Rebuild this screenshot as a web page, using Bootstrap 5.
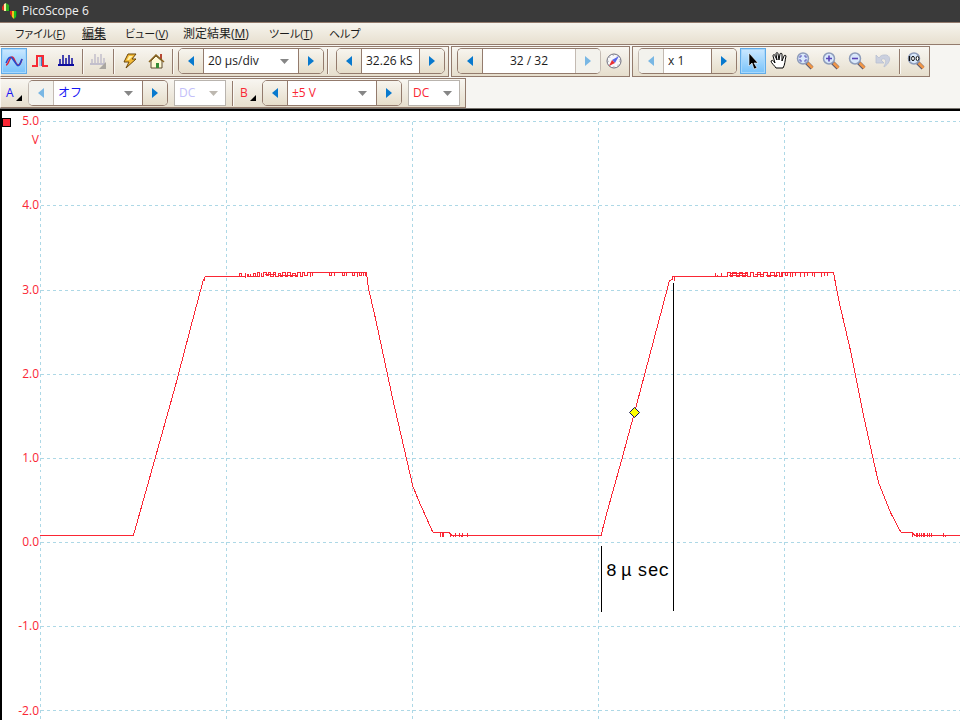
<!DOCTYPE html>
<html lang="ja">
<head>
<meta charset="utf-8">
<meta name="viewport" content="width=device-width, initial-scale=1">
<title>PicoScope 6</title>
<link rel="stylesheet" href="https://cdn.jsdelivr.net/npm/bootstrap@5.3.0/dist/css/bootstrap.min.css">
<style>
:root{--edge:#937b6d;--red:#fa2634}
body{font:12px/16px "Open Sans","Noto Sans CJK JP",sans-serif;color:#1c1c1c;background:#fff;overflow-x:hidden}
svg{display:block}
.titlebar{height:22px;background:#3a3a3a;color:#f2f2f2;padding-left:2px;gap:4px}
.titlebar h1{font-size:12px;line-height:22px;font-weight:400}
.menubar{display:grid;grid-template-columns:67px 43px 58px 86px 60px auto;height:23px;padding-left:15px;border-top:1px solid var(--edge);border-bottom:1px solid var(--edge);background:linear-gradient(#f7f5ee,#e7dfcf);font-feature-settings:"palt"}
.menubar a{color:#1c1c1c;text-decoration:none;line-height:22px;white-space:nowrap}
.menubar .kana{font-size:11px}
.dock{display:flex;flex-direction:column;gap:1px;background:#f6f5f2;padding-top:1px;border-bottom:1px solid #77736e}
.bars{column-gap:2px}
.strip{border:1px solid var(--edge);border-left-color:#fbf9f5;background:linear-gradient(#f8f6f1,#e6decd);padding:1px 3px 2px 0;flex:none}
.strip.framed{border-left-color:var(--edge);padding-left:5px;padding-right:2px}
.strip.framed:last-child{padding-right:0}
.strip.channels{padding:1px 5px 1px 1px}
.tool{width:26px;height:26px;padding:0;border:1px solid transparent;background:none;display:flex;align-items:center;justify-content:center;flex:none}
.tool.on{border-color:#62ace8;background:linear-gradient(#cbe8ff,#79c3fa);box-shadow:inset 0 0 0 1px #a8d7fb}
.tool.slim{width:24px}
.rule{width:2px;border-left:1px solid var(--edge);background:#fbf9f5;margin:1px 2px 0 3px;flex:none}
.stepper{border:1px solid var(--edge);border-radius:5px;height:26px;background:#fff;overflow:hidden;flex:none}
.stepper button{width:25px;border:0;padding:0;background:linear-gradient(#f7f5ef,#e6ddca);display:flex;align-items:center;justify-content:center;color:#0879ce}
.stepper button:first-child{border-right:1px solid var(--edge)}
.stepper button:last-child{border-left:1px solid var(--edge)}
.stepper button:disabled{color:#79b7e4;background:#f3f2ed;border-color:#c3bab2}
.stepper.dimleft{border-left-color:#c3bab2}
.stepper.dimright{border-right-color:#c3bab2}
.val{border:0;border-radius:0;padding:0 4px;font-size:12px;line-height:16px;background-color:#fff;color:#1c1c1c;min-width:0;outline:0;flex:1}
select.val,.coupling{appearance:none;background:#fff url("data:image/svg+xml,%3Csvg xmlns='http://www.w3.org/2000/svg' width='9' height='5'%3E%3Cpath d='M0 0h9L4.500 5z' fill='%23868686'/%3E%3C/svg%3E") no-repeat right 9px center}
.coupling{width:52px;height:26px;border:1px solid #b9b4ae;border-radius:0;padding:0 4px;font-size:12px;color:var(--red);flex:none;background-position:right 7px center}
.coupling:disabled{color:#c3c0fa;opacity:1;background-image:url("data:image/svg+xml,%3Csvg xmlns='http://www.w3.org/2000/svg' width='9' height='5'%3E%3Cpath d='M0 0h9L4.500 5z' fill='%23bdb8b0'/%3E%3C/svg%3E")}
.w-time{width:146px}.w-samples{width:109px}.w-page{width:144px}.w-zoom{width:99px}.w-range{width:140px}
.chan-a,.chan-a .val{color:#1616f5}
.chan-b,.chan-b .val{color:var(--red)}
.chan{padding:0 5px 0 4px;border:0;background:none;color:inherit;display:flex;align-items:center;gap:2px;height:26px;width:26px;flex:none}
.chan svg{margin-top:10px}
.gap-xs{margin-left:2px}.gap-s{margin-left:3px}.gap-l{margin-left:5px}.gap-m{margin-left:6px}
.scope{border-top:2px solid #000;border-left:2px solid #000}
.scope text{font-family:"Open Sans",sans-serif;font-size:12px;fill:var(--red)}
.scope .note text{font-family:"Liberation Mono",monospace;font-size:18px;fill:#000}
</style>
<script src="https://cdn.jsdelivr.net/npm/bootstrap@5.3.0/dist/js/bootstrap.bundle.min.js"></script>
</head>
<body>
<svg width="0" height="0" class="position-absolute" aria-hidden="true">
  <symbol id="prev" viewBox="0 0 6 10"><path d="M6 0v10L0 5z" fill="currentColor"/></symbol>
  <symbol id="next" viewBox="0 0 6 10"><path d="M0 0v10l6-5z" fill="currentColor"/></symbol>
  <symbol id="lens" viewBox="0 0 18 18">
    <path d="M10 10l6 6" stroke="#5c5a70" stroke-width="4"/>
    <path d="M11.500 11l5 5" stroke="#f09648" stroke-width="2.600"/>
    <circle cx="7" cy="6.500" r="5.500" fill="#d9e8fb" stroke="#8e9cba" stroke-width="1.500"/>
  </symbol>
  <symbol id="corner" viewBox="0 0 6 6"><path d="M6 0v6H0z" fill="#000"/></symbol>
</svg>

<header>
  <div class="titlebar d-flex align-items-center">
    <svg width="16" height="18" viewBox="0 0 16 18" aria-hidden="true">
      <path d="M0 8V5l2-3h2v7z" fill="#e03020"/><path d="M2 9V2l2-1v8z" fill="#f8f0a0"/><path d="M4 9V1l3 2v6z" fill="#30b020"/><path d="M7 9V4l1 2v3z" fill="#104a20"/>
      <path d="M8 9h2v6l-2-3z" fill="#e02818"/><path d="M10 9h2v8l-2-2z" fill="#f0c818"/><path d="M12 9h2v6l-2 2z" fill="#20c020"/><path d="M14 9h1v4l-1 2z" fill="#107020"/>
    </svg>
    <h1 class="m-0">PicoScope 6</h1>
  </div>
  <nav class="menubar">
    <a href="#" class="kana">ファイル(<u>F</u>)</a><a href="#"><u>編集</u></a><a href="#" class="kana">ビュー(<u>V</u>)</a><a href="#">測定結果(<u>M</u>)</a><a href="#" class="kana">ツール(<u>T</u>)</a><a href="#" class="kana">ヘルプ</a>
  </nav>
</header>

<div class="dock">
  <div class="bars d-flex flex-wrap">
    <div class="strip d-flex" role="toolbar" aria-label="収集">
      <button class="tool on" aria-label="スコープ モード"><svg width="18" height="14" viewBox="0 0 18 14" fill="none"><path d="M1 11C4 11 4 3 7 3s3 8 6 8 3-4 4-6" stroke="#e0283c" stroke-width="1.500"/><path d="M1 9C3 4 5 2 7 4l5 7c2 2 3-1 5-6" stroke="#234bd0" stroke-width="1.500"/></svg></button>
      <button class="tool" aria-label="残光モード"><svg width="16" height="14" viewBox="0 0 16 14"><path d="M7 2h4v10H7z" fill="#a9cbe8"/><path d="M9 2h2v10H9z" fill="#467fb8"/><path d="M0 12h5V2h6v10h5" fill="none" stroke="#f52b35" stroke-width="2"/></svg></button>
      <button class="tool" aria-label="スペクトル モード"><svg width="16" height="14" viewBox="0 0 16 14"><path d="M0 11h16" stroke="#0c0c9e" stroke-width="2"/><path d="M2 11V5M5 11V1M8 11V4M11 11V1M14 11V4" fill="none" stroke="#0c0c9e" stroke-width="1.500"/></svg></button>
      <span class="rule"></span>
      <button class="tool slim" disabled aria-label="スペクトル設定"><svg width="18" height="16" viewBox="0 0 18 16"><path d="M1 11h15" stroke="#c2bfcc" stroke-width="2"/><path d="M3 11V6M6 11V1M9 11V4M12 11V1M15 11V5" fill="none" stroke="#c2bfcc" stroke-width="1.500"/><path d="M17 9v7h-7z" fill="#aaa6a0"/></svg></button>
      <span class="rule"></span>
      <button class="tool" aria-label="自動セットアップ"><svg width="14" height="16" viewBox="0 0 14 16"><path d="M5 1h8L9 6h4L3 15l3-6H1z" fill="#f3ba36" stroke="#6b4609"/><path d="M6 3h4L6 7H4z" fill="#fff0a8"/></svg></button>
      <button class="tool" aria-label="ホーム"><svg width="17" height="16" viewBox="0 0 17 16"><path d="M12 1h2v6h-2z" fill="#b64732"/><path d="M3 8l5-5 6 5v7H3z" fill="#fff9d6" stroke="#5c4a2e"/><path d="M1 9l7-7 8 7" fill="none" stroke="#8a6420" stroke-width="1.600"/><path d="M8 10h3v5H8z" fill="#368e36"/></svg></button>
      <span class="rule"></span>
      <div class="stepper w-time d-flex gap-xs">
        <button aria-label="前の時間軸"><svg width="6" height="10"><use href="#prev"/></svg></button>
        <select class="val" aria-label="時間軸"><option>20 µs/div</option></select>
        <button aria-label="次の時間軸"><svg width="6" height="10"><use href="#next"/></svg></button>
      </div>
      <span class="rule"></span>
      <div class="stepper w-samples d-flex gap-l">
        <button aria-label="サンプルを減らす"><svg width="6" height="10"><use href="#prev"/></svg></button>
        <input class="val" aria-label="サンプル数" value="32.26 kS">
        <button aria-label="サンプルを増やす"><svg width="6" height="10"><use href="#next"/></svg></button>
      </div>
    </div>
    <div class="strip framed d-flex" role="toolbar" aria-label="バッファ">
      <div class="stepper dimright w-page d-flex">
        <button aria-label="前の波形"><svg width="6" height="10"><use href="#prev"/></svg></button>
        <input class="val text-center" aria-label="波形番号" value="32 / 32">
        <button disabled aria-label="次の波形"><svg width="6" height="10"><use href="#next"/></svg></button>
      </div>
      <button class="tool" aria-label="バッファ ナビゲータ"><svg width="16" height="16" viewBox="0 0 16 16"><circle cx="8" cy="8" r="7" fill="#f8f8fb" stroke="#6c6c7c"/><circle cx="8" cy="8" r="5.500" fill="none" stroke="#aaa" stroke-dasharray="1 3"/><path d="M13 3L6 7l3 3z" fill="#5966e8"/><path d="M3 13l3-6 3 3z" fill="#e92e32"/></svg></button>
    </div>
    <div class="strip framed d-flex" role="toolbar" aria-label="ズーム">
      <div class="stepper dimleft w-zoom d-flex">
        <button disabled aria-label="倍率を下げる"><svg width="6" height="10"><use href="#prev"/></svg></button>
        <input class="val" aria-label="倍率" value="x 1">
        <button aria-label="倍率を上げる"><svg width="6" height="10"><use href="#next"/></svg></button>
      </div>
      <button class="tool on gap-s" aria-label="選択"><svg width="12" height="18" viewBox="0 0 12 18"><path d="M2 1v13l3-3 2 6 3-1-3-5h4z" fill="#000" stroke="#fff" stroke-width=".6"/></svg></button>
      <button class="tool" aria-label="手のひら"><svg width="18" height="18" viewBox="0 0 18 18"><path d="M6 16c-1-2-5-5-5-7 1-1 2-1 4 2L3 4c0-2 2-2 2 0l2 4-1-6c0-2 2-2 2 0l1 6 1-6c0-1 2-1 2 0v7l2-5c0-1 2-1 2 0-1 4-1 9-3 12z" fill="#fff" stroke="#000"/></svg></button>
      <button class="tool" aria-label="範囲ズーム"><svg width="18" height="18" viewBox="0 0 18 18"><use href="#lens"/><path d="M6 4H4v2M8 4h2v2M4 7v2h2M10 7v2H8" fill="none" stroke="#5a55b8"/></svg></button>
      <button class="tool" aria-label="拡大"><svg width="18" height="18" viewBox="0 0 18 18"><use href="#lens"/><path d="M4 6.500h6M7 3.500v6" stroke="#5a45b8" stroke-width="1.600"/></svg></button>
      <button class="tool" aria-label="縮小"><svg width="18" height="18" viewBox="0 0 18 18"><use href="#lens"/><path d="M4 6.500h6" stroke="#5a45b8" stroke-width="1.600"/></svg></button>
      <button class="tool" disabled aria-label="元に戻す"><svg width="16" height="16" viewBox="0 0 16 16"><path d="M1 2v8h8L6 7c3-3 7 0 3 6v1c8-5 7-13 0-12-2 0-4 1-5 3z" fill="#cbd0df" stroke="#b8bfd0" stroke-width=".8"/></svg></button>
      <span class="rule"></span>
      <button class="tool" aria-label="100%"><svg width="18" height="18" viewBox="0 0 18 18"><use href="#lens"/><path d="M2.500 4v5" stroke="#111" stroke-width="1.400"/><ellipse cx="6" cy="6.500" rx="1.400" ry="2.200" fill="#fff" stroke="#111"/><ellipse cx="10.500" cy="6.500" rx="1.400" ry="2.200" fill="#fff" stroke="#111"/></svg></button>
    </div>
  </div>
  <div class="bars d-flex flex-wrap">
    <div class="strip channels d-flex" role="toolbar" aria-label="チャンネル">
      <div class="chan-a d-flex">
        <button class="chan">A<svg width="6" height="6"><use href="#corner"/></svg></button>
        <div class="stepper dimleft w-range d-flex">
          <button disabled aria-label="A レンジを下げる"><svg width="6" height="10"><use href="#prev"/></svg></button>
          <select class="val" aria-label="A レンジ"><option>オフ</option></select>
          <button aria-label="A レンジを上げる"><svg width="6" height="10"><use href="#next"/></svg></button>
        </div>
        <select class="coupling gap-m" disabled aria-label="A 結合"><option>DC</option></select>
      </div>
      <span class="rule gap-m"></span>
      <div class="chan-b d-flex">
        <button class="chan">B<svg width="6" height="6"><use href="#corner"/></svg></button>
        <div class="stepper w-range d-flex">
          <button aria-label="B レンジを下げる"><svg width="6" height="10"><use href="#prev"/></svg></button>
          <select class="val" aria-label="B レンジ"><option>±5 V</option></select>
          <button aria-label="B レンジを上げる"><svg width="6" height="10"><use href="#next"/></svg></button>
        </div>
        <select class="coupling gap-m" aria-label="B 結合"><option>DC</option></select>
      </div>
    </div>
  </div>
</div>

<main class="scope">
  <svg class="w-100" viewBox="2 111 958 609" role="img" aria-label="チャンネル B の波形">
    <g transform="translate(.5 .5)" fill="none" shape-rendering="crispEdges">
      <path stroke="#add8e6" stroke-dasharray="3 3" d="M40 121H960M40 205H960M40 290H960M40 374H960M40 458H960M40 542H960M40 626H960M40 710H960M40 121V720M226 121V720M412 121V720M598 121V720M784 121V720"/>
      <path stroke="#fa2634" d="M39 535H133L134 531 147 485 175 385 192 320 203 279 205 276H244M250 276H259M311 272H366L368 288 375 318 393 402 411 480 412 485 419 502 432 531 433 532H449L450 535H601L602 529 607 510 621 460 634 412 651 348 669 280 672 279V276H726M780 272H833L836 288 839 303 850 350 863 415 873 460 878 482 890 512 900 531 901 532H912L914 535H960"/>
      <path stroke="#fa2634" d="M204 276v4M239 276v-3h2v3M245 277v-5M247 276v-3M248 273v3h2v-3M253 276v-3h2v3M257 276v-4h2v4M261 272v4h2v-4h3v3h2v-3h2v4h3v-4h2v4h3v-3h2v3h2v-4h3v4h2v-4h3v4h2v-3h3v3h2v-4h3v4h2v-4h2v3h3v-3h5v3M264 274h10M277 275h20M310 272v4M329 272v3h2v-3M334 272v3M342 272v3h2v-3M346 272v3M352 272v3h2v-3M357 272v4M359 272v3h2v-3M363 272v3M365 272v3"/>
      <path stroke="#fa2634" d="M674 276v4M715 276v-4M716 275h1M720 276h1v-4M727 276v-4h3v4h2v-4h4v4h3v-4h3v4h3v-4h2v4h3v-4h3v4h4v-4h3v4h3v-4h4v4h3v-4h4v4h2v-4h3v4h2v-4M728 275h18M730 273h16M754 274h9M765 275h12M782 272v4M785 272v3h2v-3M790 272v4M792 272v4M795 272v3M800 272v4M804 272v4M807 272v3M812 272v3M814 272v4M821 272v4M824 272v3M827 272v3"/>
      <path stroke="#fa2634" d="M440 532v4M442 532v4M443 532v4M450 532v4M451 533v2M453 534v2M455 532v4M459 532v4M461 534v2M462 532v4M467 532v4M912 532v4M914 533v2M916 532v4M917 532v4M919 532v4M921 532v4M923 532v4M924 532v4M927 532v4M929 532v4M931 532v4M943 532v4M945 534v2"/>
      <path stroke="#000" d="M601 545V611M673 282V610"/>
      <path fill="#ff0" stroke="#10105c" shape-rendering="auto" d="M634 407l5 5-5 5-5-5z"/>
      <path fill="#fa2634" stroke="#000" d="M2 118h8v8H2z"/>
    </g>
    <g text-anchor="end">
      <text x="39" y="125">5.0</text><text x="39" y="144">V</text><text x="39" y="209">4.0</text><text x="39" y="294">3.0</text><text x="39" y="378">2.0</text><text x="39" y="462">1.0</text><text x="39" y="546">0.0</text><text x="39" y="630">-1.0</text><text x="39" y="715">-2.0</text>
    </g>
    <g class="note">
      <text x="606" y="576">8</text><text x="621" y="576">μ</text><text x="637" y="576">sec</text>
    </g>
  </svg>
</main>
</body>
</html>
